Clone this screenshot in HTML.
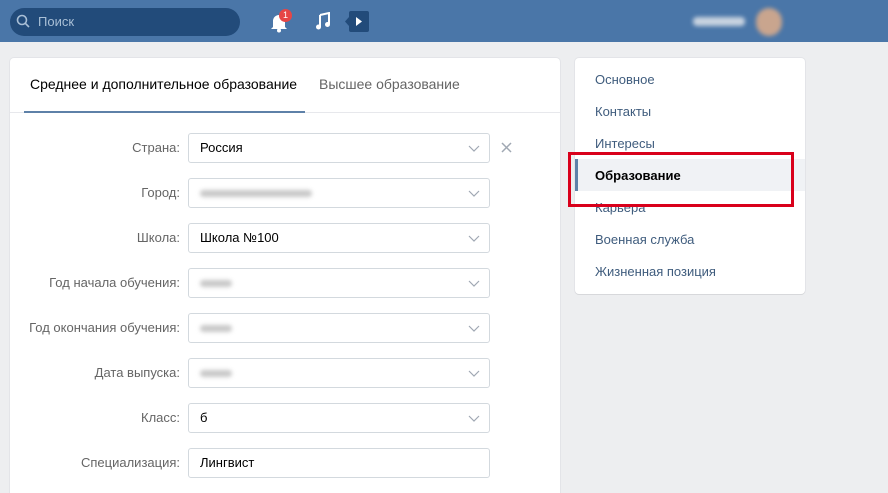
<!DOCTYPE html>
<html><head><meta charset="utf-8"><style>
*{box-sizing:border-box;margin:0;padding:0}
html{width:888px;height:493px;overflow:hidden}
body{width:888px;height:493px;overflow:hidden;background:#edeef0;font-family:"Liberation Sans",sans-serif;font-size:13px;color:#000;position:relative}
.hdr{position:absolute;left:0;top:0;width:888px;height:42px;background:#4a76a8}
.search{position:absolute;left:10px;top:8px;width:230px;height:28px;border-radius:14px;background:#224b7a;color:#a9bfd6;padding-left:28px;line-height:28px;font-size:13px}
.card{position:absolute;background:#fff;border-radius:4px;box-shadow:0 1px 0 0 #d7d8db,0 0 0 1px #e3e4e8}
.tab{position:absolute;top:76px;font-size:14px}
.lbl{position:absolute;right:708px;color:#656565;text-align:right;white-space:nowrap}
.inp{position:absolute;left:188px;width:302px;height:30px;border:1px solid #d3d9de;border-radius:3px;padding-left:11px;line-height:28px;color:#000}
.inp svg{position:absolute;right:9px;top:11px}
.blur{display:inline-block;height:7px;background:#c8c8c8;border-radius:4px;filter:blur(2px);vertical-align:middle}
.m{position:absolute;left:595px;color:#3f5c7d;font-size:13px}
</style></head><body>
<div class="hdr">
 <div class="search">Поиск</div>
 <svg style="position:absolute;left:16px;top:14px" width="14" height="14" viewBox="0 0 14 14"><circle cx="6" cy="6" r="4.5" fill="none" stroke="#a9bfd6" stroke-width="1.6"/><path d="M9.3 9.3L13 13" stroke="#a9bfd6" stroke-width="1.6"/></svg>
 <svg style="position:absolute;left:269px;top:11px" width="20" height="22" viewBox="0 0 20 22"><path d="M4 16V10a6 6 0 0 1 12 0v6l2 2H2z" fill="#fff"/><circle cx="10" cy="19.5" r="2" fill="#fff"/></svg>
 <div style="position:absolute;left:279px;top:9px;width:13px;height:13px;border-radius:7px;background:#e64646;color:#fff;font-size:9px;text-align:center;line-height:13px">1</div>
 <svg style="position:absolute;left:315px;top:12px" width="16" height="18" viewBox="0 0 16 18"><path d="M5 3l9-2v11" fill="none" stroke="#fff" stroke-width="2"/><path d="M5 3v12" stroke="#fff" stroke-width="2"/><circle cx="3.5" cy="15" r="2.5" fill="#fff"/><circle cx="12.5" cy="12.5" r="2.5" fill="#fff"/></svg>
 <svg style="position:absolute;left:345px;top:11px" width="24" height="21" viewBox="0 0 24 21"><rect x="4" y="0" width="20" height="21" rx="2" fill="#224b7a"/><path d="M0 10.5L4 6v9z" fill="#224b7a"/><path d="M11 6l6 4.5-6 4.5z" fill="#fff"/></svg>
 <div style="position:absolute;left:693px;top:17px;width:52px;height:9px;background:#c8d3e0;border-radius:4px;filter:blur(2px)"></div>
 <div style="position:absolute;left:756px;top:8px;width:26px;height:28px;border-radius:13px;background:#c9a58e;filter:blur(2px)"></div>
</div>

<div class="card" style="left:10px;top:58px;width:550px;height:450px"></div>
<div style="position:absolute;left:10px;top:112px;width:550px;height:1px;background:#e7e8ec"></div>
<div style="position:absolute;left:24px;top:111px;width:281px;height:2px;background:#5e81a8"></div>
<div class="tab" style="left:30px">Среднее и дополнительное образование</div>
<div class="tab" style="left:319px;color:#656565">Высшее образование</div>

<div class="lbl" style="top:140px">Страна:</div>
<div class="inp" style="top:133px">Россия<svg width="12" height="7" viewBox="0 0 12 7"><path d="M1 1l5 5 5-5" fill="none" stroke="#a0a8b3" stroke-width="1.2"/></svg></div>
<svg style="position:absolute;left:501px;top:142px" width="11" height="11" viewBox="0 0 11 11"><path d="M1 1l9 9M10 1l-9 9" stroke="#a0a8b3" stroke-width="1.5"/></svg>

<div class="lbl" style="top:185px">Город:</div>
<div class="inp" style="top:178px"><span class="blur" style="width:112px"></span><svg width="12" height="7" viewBox="0 0 12 7"><path d="M1 1l5 5 5-5" fill="none" stroke="#a0a8b3" stroke-width="1.2"/></svg></div>

<div class="lbl" style="top:230px">Школа:</div>
<div class="inp" style="top:223px">Школа №100<svg width="12" height="7" viewBox="0 0 12 7"><path d="M1 1l5 5 5-5" fill="none" stroke="#a0a8b3" stroke-width="1.2"/></svg></div>

<div class="lbl" style="top:275px">Год начала обучения:</div>
<div class="inp" style="top:268px"><span class="blur" style="width:32px"></span><svg width="12" height="7" viewBox="0 0 12 7"><path d="M1 1l5 5 5-5" fill="none" stroke="#a0a8b3" stroke-width="1.2"/></svg></div>

<div class="lbl" style="top:320px">Год окончания обучения:</div>
<div class="inp" style="top:313px"><span class="blur" style="width:32px"></span><svg width="12" height="7" viewBox="0 0 12 7"><path d="M1 1l5 5 5-5" fill="none" stroke="#a0a8b3" stroke-width="1.2"/></svg></div>

<div class="lbl" style="top:365px">Дата выпуска:</div>
<div class="inp" style="top:358px"><span class="blur" style="width:32px"></span><svg width="12" height="7" viewBox="0 0 12 7"><path d="M1 1l5 5 5-5" fill="none" stroke="#a0a8b3" stroke-width="1.2"/></svg></div>

<div class="lbl" style="top:410px">Класс:</div>
<div class="inp" style="top:403px">б<svg width="12" height="7" viewBox="0 0 12 7"><path d="M1 1l5 5 5-5" fill="none" stroke="#a0a8b3" stroke-width="1.2"/></svg></div>

<div class="lbl" style="top:455px">Специализация:</div>
<div class="inp" style="top:448px">Лингвист</div>

<div class="card" style="left:575px;top:58px;width:230px;height:236px"></div>
<div style="position:absolute;left:575px;top:159px;width:230px;height:32px;background:#f0f2f5;border-left:3px solid #5e81a8"></div>
<div class="m" style="top:72px">Основное</div>
<div class="m" style="top:104px">Контакты</div>
<div class="m" style="top:136px">Интересы</div>
<div class="m" style="top:168px;color:#000;font-weight:bold">Образование</div>
<div class="m" style="top:200px">Карьера</div>
<div class="m" style="top:232px">Военная служба</div>
<div class="m" style="top:264px">Жизненная позиция</div>
<div style="position:absolute;left:568px;top:152px;width:226px;height:55px;border:3px solid #d9001b"></div>
</body></html>
